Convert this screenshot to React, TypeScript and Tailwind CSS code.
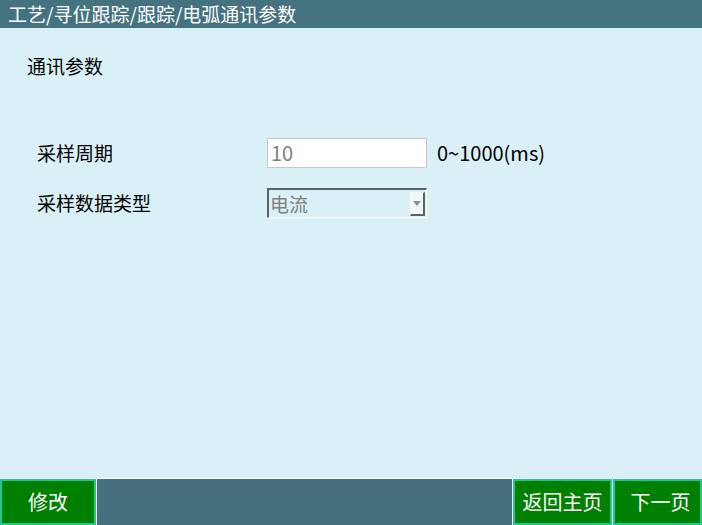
export default function App() {
  const font = { fontFamily: '"Noto Sans CJK SC", "Noto Sans", sans-serif' };
  return (
    <div
      className="w-[702px] h-[525px] flex flex-col bg-[#d9f0f7] text-black overflow-hidden"
      style={font}
    >
      {/* 标题栏 */}
      <div className="h-[28px] bg-[#45727f] text-white text-[19px] leading-[28px] pl-[8px] whitespace-nowrap">
        工艺/寻位跟踪/跟踪/电弧通讯参数
      </div>

      {/* 内容 */}
      <div className="flex-1 flex flex-col">
        <div className="text-[19px] leading-[26px] pl-[27px] pt-[25px]">通讯参数</div>

        <div className="flex flex-col gap-[20px] mt-[59px]">
          <div className="flex items-center h-[30px]">
            <span className="w-[267px] shrink-0 pl-[37px] text-[19px]">采样周期</span>
            <div className="w-[160px] h-[30px] bg-white border border-[#c8c8c8] flex items-center pl-[3px] text-[20px] text-[#808080]">
              10
            </div>
            <span className="ml-[10px] text-[20px]">0~1000(ms)</span>
          </div>
          <div className="flex items-center h-[30px]">
            <span className="w-[267px] shrink-0 pl-[37px] text-[19px]">采样数据类型</span>
            <div className="w-[160px] h-[30px] flex items-center border-t-2 border-l-2 border-b border-r border-t-[#5a6466] border-l-[#5a6466] border-b-white border-r-white">
              <span className="flex-1 pl-[1px] text-[19px] text-[#808080] leading-none">电流</span>
              <div className="w-[15px] h-[24px] mr-[1px] bg-[#eef7fa] border-r-2 border-b-2 border-r-[#5a6466] border-b-[#5a6466] border-l border-t border-l-white border-t-white flex items-center justify-center">
                <svg width="8" height="5" viewBox="0 0 8 5">
                  <path d="M0 0 L8 0 L4 5 Z" fill="#8a9294" />
                </svg>
              </div>
            </div>
          </div>
        </div>
      </div>

      {/* 底部按钮 */}
      <div className="h-[47px] flex bg-white gap-px pt-px">
        <button className="w-[96px] bg-[#008000] border-2 border-[#1ec98f] text-white text-[20px]">
          修改
        </button>
        <div className="flex-1 bg-[#45717f]" />
        <button className="w-[99px] bg-[#008000] border-2 border-[#1ec98f] text-white text-[20px]">
          返回主页
        </button>
        <button className="w-[89px] bg-[#008000] border-2 border-[#1ec98f] text-white text-[20px] pl-[6px]">
          下一页
        </button>
      </div>
    </div>
  );
}
